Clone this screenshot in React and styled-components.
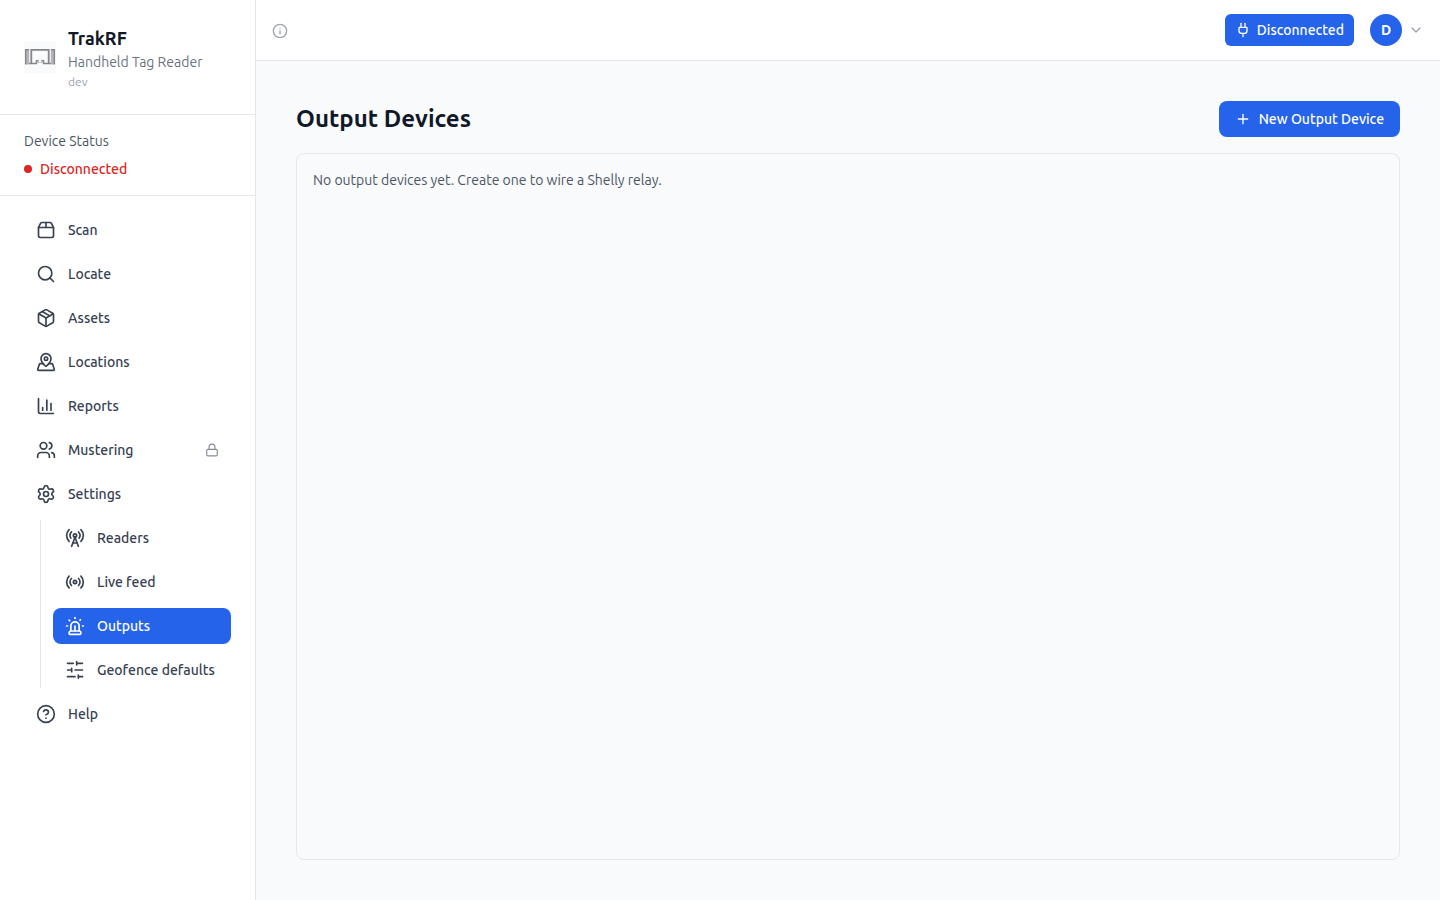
import React from 'react'
import styled, { createGlobalStyle } from 'styled-components'
import {
  ChartColumn,
  ChevronDown,
  CircleQuestionMark,
  Info,
  Lock,
  MapPinned,
  Package,
  Package2,
  Plug,
  Plus,
  Radio,
  RadioTower,
  Search,
  Settings,
  Siren,
  Users,
} from 'lucide-react'

const Sliders = ({ size }) => (
  <svg
    width={size}
    height={size}
    viewBox="0 0 24 24"
    fill="none"
    stroke="currentColor"
    strokeWidth="2"
    strokeLinecap="round"
    strokeLinejoin="round"
    aria-hidden="true"
  >
    <path d="M21 4h-7M10 4H3M21 12h-9M8 12H3M21 20h-5M12 20H3M14 2v4M8 10v4M16 18v4" />
  </svg>
)

const mainLinks = [
  { label: 'Scan', icon: Package2 },
  { label: 'Locate', icon: Search },
  { label: 'Assets', icon: Package },
  { label: 'Locations', icon: MapPinned },
  { label: 'Reports', icon: ChartColumn },
  { label: 'Mustering', icon: Users, locked: true },
  { label: 'Settings', icon: Settings },
]

const settingsLinks = [
  { label: 'Readers', icon: RadioTower },
  { label: 'Live feed', icon: Radio },
  { label: 'Outputs', icon: Siren, active: true },
  { label: 'Geofence defaults', icon: Sliders },
]

const Logo = () => (
  <LogoBox>
    <svg width="32" height="32" viewBox="0 0 32 32" fill="none" stroke="#85868a" aria-hidden="true">
      <path d="M3.7 9V23.5M28.3 9V23.5" stroke="#b4b5b8" strokeWidth="3" />
      <path d="M5 8.7H1.7V23.5M27 8.7H30.3V23.5" strokeWidth="1.5" />
      <path d="M13 22.5H5M19 22.5H27" strokeWidth="1.7" />
      <path d="M7.3 22.5V8.9H24.7V22.5" strokeWidth="1.8" />
      <path d="M12.5 22.5V19.7H14.7M17.300 19.7H19.5V22.5" strokeWidth="1.5" />
      <path d="M14 21.5H15.5M16.500 21.5H18" stroke="#a5a6a9" />
    </svg>
  </LogoBox>
)

const NavItem = ({ link }) => {
  const Icon = link.icon
  return (
    <li>
      <NavLink href="#" $active={link.active} aria-current={link.active ? 'page' : undefined}>
        <Icon size={20} />
        <span>{link.label}</span>
        {link.locked && <Lock className="lock" size={14} />}
      </NavLink>
    </li>
  )
}

const App = () => {
  return (
    <>
      <GlobalStyle />
      <Page>
        <Sidebar>
          <Brand>
            <Logo />
            <div>
              <BrandName>TrakRF</BrandName>
              <BrandText>Handheld Tag Reader</BrandText>
              <Version>dev</Version>
            </div>
          </Brand>
          <Status>
            <div>Device Status</div>
            <StatusValue>Disconnected</StatusValue>
          </Status>
          <nav>
            <NavList>
              {mainLinks.map((link) => (
                <NavItem key={link.label} link={link} />
              ))}
              <li>
                <SubList>
                  {settingsLinks.map((link) => (
                    <NavItem key={link.label} link={link} />
                  ))}
                </SubList>
              </li>
              <NavItem link={{ label: 'Help', icon: CircleQuestionMark }} />
            </NavList>
          </nav>
        </Sidebar>

        <Content>
          <TopBar>
            <IconButton type="button" aria-label="About this page">
              <Info size={16} />
            </IconButton>
            <TopActions>
              <ConnectButton type="button">
                <Plug size={16} />
                Disconnected
              </ConnectButton>
              <UserButton type="button" aria-label="Account menu">
                <Avatar>D</Avatar>
                <ChevronDown size={16} />
              </UserButton>
            </TopActions>
          </TopBar>
          <Main>
            <TitleRow>
              <h1>Output Devices</h1>
              <PrimaryButton type="button">
                <Plus size={16} />
                New Output Device
              </PrimaryButton>
            </TitleRow>
            <Panel>No output devices yet. Create one to wire a Shelly relay.</Panel>
          </Main>
        </Content>
      </Page>
    </>
  )
}

const GlobalStyle = createGlobalStyle`
  *, *::before, *::after {
    box-sizing: border-box;
  }
  body {
    margin: 0;
    background: #f9fafb;
    color: #111827;
    font-family: Ubuntu, "Noto Sans", "Open Sans", sans-serif;
    font-size: 14px;
    line-height: 20px;
  }
  h1, p, ul {
    margin: 0;
    padding: 0;
  }
  ul {
    list-style: none;
  }
  button {
    border: 0;
    padding: 0;
    background: none;
    font: inherit;
    cursor: pointer;
  }
  svg {
    display: block;
    flex-shrink: 0;
  }
`

const Page = styled.div`
  display: flex;
  min-height: 100vh;
`
const Sidebar = styled.aside`
  flex: 0 0 256px;
  background: #fff;
  border-right: 1px solid #e5e7eb;
`
const Brand = styled.div`
  display: flex;
  align-items: center;
  gap: 12px;
  padding: 24px;
  border-bottom: 1px solid #e5e7eb;
`
const LogoBox = styled.div`
  background: #f9fafb;
`
const BrandName = styled.div`
  font-size: 18px;
  font-weight: 600;
  line-height: 28px;
`
const BrandText = styled.p`
  color: #6b7280;
`
const Version = styled.p`
  margin-top: 2px;
  color: #9ca3af;
  font-size: 12px;
  line-height: 16px;
`
const Status = styled.div`
  padding: 16px 24px;
  border-bottom: 1px solid #e5e7eb;
  color: #4b5563;
`
const StatusValue = styled.div`
  display: flex;
  align-items: center;
  gap: 8px;
  margin-top: 8px;
  color: #dc2626;
  font-weight: 500;

  &::before {
    content: '';
    width: 8px;
    height: 8px;
    border-radius: 50%;
    background: #dc2626;
  }
`
const NavList = styled.ul`
  display: grid;
  gap: 8px;
  padding: 16px 24px;
`
const SubList = styled.ul`
  display: grid;
  gap: 8px;
  margin-left: 16px;
  padding-left: 12px;
  border-left: 1px solid #e5e7eb;
`
const NavLink = styled.a`
  display: flex;
  align-items: center;
  gap: 12px;
  padding: 8px 12px;
  border-radius: 8px;
  background: ${({ $active }) => ($active ? '#2563eb' : 'transparent')};
  color: ${({ $active }) => ($active ? '#fff' : '#374151')};
  font-weight: 500;
  text-decoration: none;
  white-space: nowrap;

  .lock {
    margin-left: auto;
    opacity: 0.6;
  }
`
const Content = styled.div`
  flex: 1;
  display: flex;
  flex-direction: column;
  min-width: 0;
`
const TopBar = styled.header`
  display: flex;
  align-items: center;
  justify-content: space-between;
  padding: 14px 16px;
  background: #fff;
  border-bottom: 1px solid #e5e7eb;
`
const IconButton = styled.button`
  padding-top: 2px;
  color: #9ca3af;
`
const TopActions = styled.div`
  display: flex;
  align-items: center;
  gap: 16px;
`
const ConnectButton = styled.button`
  display: flex;
  align-items: center;
  gap: 6px;
  padding: 6px 10px;
  border-radius: 6px;
  background: #2563eb;
  color: #fff;
  font-weight: 500;
`
const UserButton = styled.button`
  display: flex;
  align-items: center;
  gap: 6px;
  color: #9ca3af;
`
const Avatar = styled.span`
  display: flex;
  align-items: center;
  justify-content: center;
  width: 32px;
  height: 32px;
  border-radius: 50%;
  background: #2563eb;
  color: #fff;
  font-weight: 600;
`
const Main = styled.main`
  flex: 1;
  display: flex;
  flex-direction: column;
  gap: 16px;
  padding: 40px;
`
const TitleRow = styled.div`
  display: flex;
  align-items: center;
  justify-content: space-between;

  h1 {
    font-size: 24px;
    font-weight: 600;
    line-height: 32px;
  }
`
const PrimaryButton = styled.button`
  display: flex;
  align-items: center;
  gap: 8px;
  padding: 8px 16px;
  border-radius: 8px;
  background: #2563eb;
  color: #fff;
  font-weight: 500;
`
const Panel = styled.section`
  flex: 1;
  padding: 16px;
  border: 1px solid #e5e7eb;
  border-radius: 8px;
  color: #4b5563;
`

export default App
